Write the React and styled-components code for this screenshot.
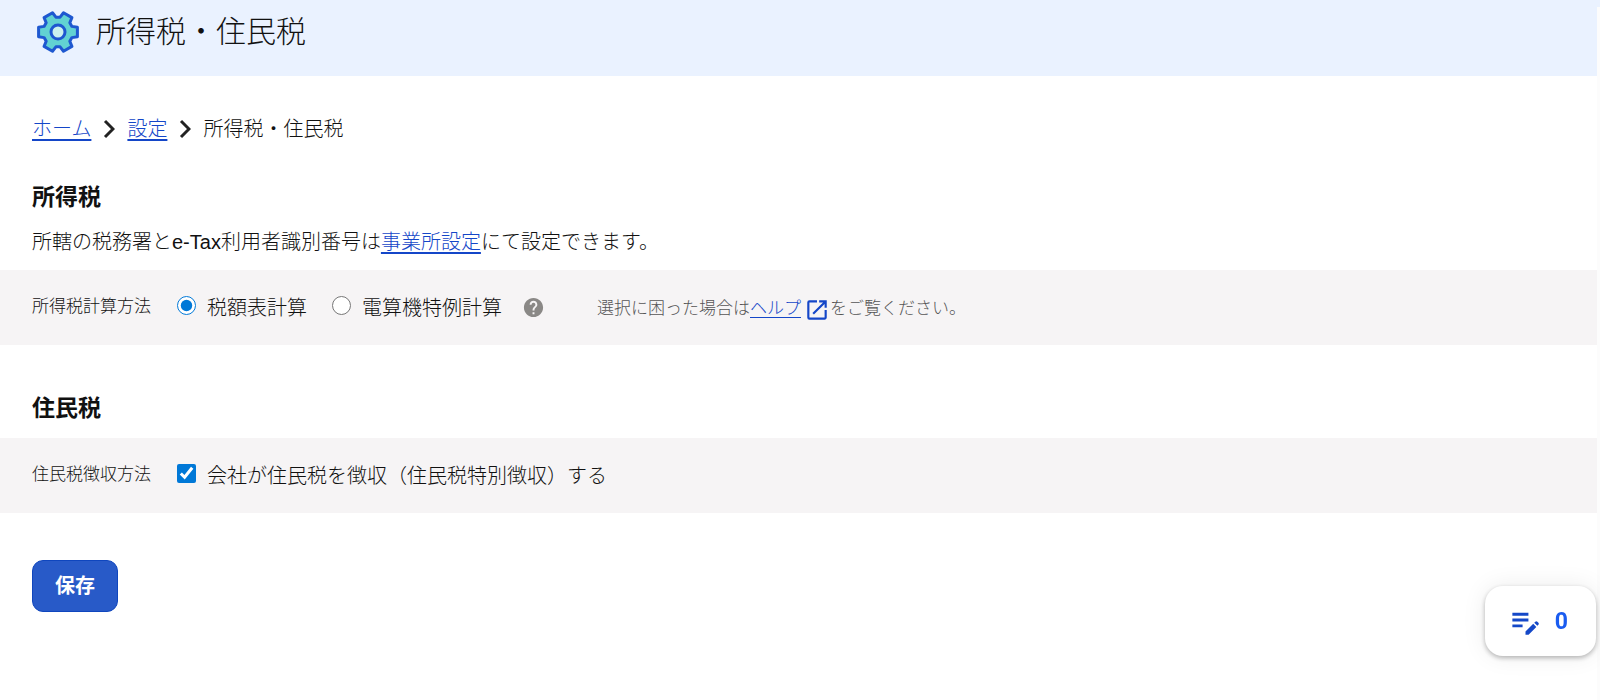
import { useState } from 'react';
import styled, { createGlobalStyle } from 'styled-components';
import { MdEditNote, MdHelp, MdOpenInNew } from 'react-icons/md';


const GlobalStyle = createGlobalStyle`
  * {
    box-sizing: border-box;
  }
  body {
    margin: 0;
    background-color: #fff;
    color: #111;
    font-family: "Liberation Sans", "Noto Sans CJK JP", sans-serif;
    font-size: 20px;
    font-weight: 300;
    line-height: 30px;
  }
`;

const TopEdge = styled.div`
  height: 7px;
  background-color: #eaf2ff;
`;
const Page = styled.div`
  min-height: calc(100vh - 7px);
  border-right: 3px solid #fcfcfc;
`;
const Header = styled.header`
  display: flex;
  align-items: center;
  gap: 16px;
  height: 69px;
  padding: 0 36px 19px;
  background-color: #eaf2ff;
`;
const Title = styled.h1`
  margin: 0;
  font-size: 30px;
  font-weight: 300;
  line-height: 46px;
`;

const Breadcrumb = styled.nav`
  display: flex;
  align-items: center;
  gap: 12px;
  padding: 38px 32px 0;
`;
const TextLink = styled.a`
  color: #1446c8;
  text-decoration: underline;
  text-underline-offset: 3px;
`;

const Section = styled.section`
  padding-top: ${({ $top }) => $top}px;
`;
const SectionTitle = styled.h2`
  margin: 0 32px 15px;
  font-size: 23px;
  font-weight: 700;
  line-height: 30px;
`;
const Lead = styled.p`
  margin: 0 32px 13px;
`;
const Band = styled.div`
  display: flex;
  flex-wrap: wrap;
  align-items: center;
  min-height: 75px;
  padding: 0 32px;
  background-color: #f6f4f5;
`;
const FieldName = styled.span`
  width: 145px;
  padding-bottom: 1px;
  font-size: 17px;
`;
const Choice = styled.label`
  display: flex;
  align-items: center;
  margin-right: ${({ $gap }) => $gap || 0}px;
`;
const ChoiceInput = styled.input`
  width: 19px;
  height: 19px;
  margin: 0 11px 5px 0;
  accent-color: #0078d7;
`;
const HelpButton = styled.button`
  display: flex;
  margin: 0 52px 0 0;
  padding: 0;
  border: 0;
  background: none;
  color: #8a8886;
  cursor: pointer;
`;
const Note = styled.span`
  display: flex;
  align-items: center;
  padding-top: 2px;
  color: #555;
  font-size: 17px;
`;
const HelpLink = styled(TextLink)`
  display: flex;
  align-items: center;
  svg {
    margin: 2px 0 0 3px;
  }
`;

const SaveButton = styled.button`
  display: block;
  height: 52px;
  margin: 47px 32px;
  padding: 0 22px;
  border: 1px solid #0f46be;
  border-radius: 11px;
  background-color: #285ac8;
  color: #fff;
  font: inherit;
  font-weight: 700;
  cursor: pointer;
`;
const MemoButton = styled.button`
  position: fixed;
  right: 4px;
  bottom: 44px;
  display: flex;
  align-items: center;
  gap: 12px;
  height: 70px;
  padding: 0 28px 0 23px;
  border: 0;
  border-radius: 18px;
  background-color: #fff;
  box-shadow: 0 2px 5px rgba(0, 0, 0, 0.28), 0 0 24px rgba(0, 0, 0, 0.08);
  color: #1448c8;
  cursor: pointer;
`;
const MemoCount = styled.span`
  color: #1a5cf0;
  font-family: Roboto, sans-serif;
  font-size: 23px;
  font-weight: 700;
`;


// six teeth, each one: root, tip, tip, root
const gearPoints = [0, 60, 120, 180, 240, 300].flatMap(tooth =>
  [[-22, 15], [-14, 20], [14, 20], [22, 15]].map(([turn, radius]) => {
    const angle = ((tooth + turn) * Math.PI) / 180;
    return `${22 + radius * Math.cos(angle)},${21 + radius * Math.sin(angle)}`;
  })
).join(' ');

function GearIcon() {
  return (
    <svg width="44" height="42" viewBox="0 0 44 42" aria-hidden="true">
      <polygon points={gearPoints} fill="#62d2d2" stroke="#1e58d0" strokeWidth="3" strokeLinejoin="round" />
      <circle cx="22" cy="21" r="7" fill="#ccf2ee" stroke="#1e58d0" strokeWidth="3" />
    </svg>
  );
}

function Chevron() {
  return (
    <svg width="12" height="20" viewBox="0 0 12 20" aria-hidden="true">
      <path d="M2 2 L10 10 L2 18" fill="none" stroke="#222" strokeWidth="3" />
    </svg>
  );
}


export default function App() {
  const [method, setMethod] = useState('table');
  const [collected, setCollected] = useState(true);

  return (
    <>
      <GlobalStyle />
      <TopEdge />
      <Page>
        <Header>
          <GearIcon />
          <Title>所得税・住民税</Title>
        </Header>

        <Breadcrumb>
          <TextLink href="#home">ホーム</TextLink>
          <Chevron />
          <TextLink href="#settings">設定</TextLink>
          <Chevron />
          <span>所得税・住民税</span>
        </Breadcrumb>

        <Section $top={38}>
          <SectionTitle>所得税</SectionTitle>
          <Lead>
            所轄の税務署とe-Tax利用者識別番号は<TextLink href="#office">事業所設定</TextLink>にて設定できます。
          </Lead>
          <Band role="radiogroup" aria-labelledby="method-name">
            <FieldName id="method-name">所得税計算方法</FieldName>
            <Choice $gap={25}>
              <ChoiceInput
                type="radio"
                name="method"
                checked={method === 'table'}
                onChange={() => setMethod('table')}
              />
              税額表計算
            </Choice>
            <Choice $gap={20}>
              <ChoiceInput
                type="radio"
                name="method"
                checked={method === 'computer'}
                onChange={() => setMethod('computer')}
              />
              電算機特例計算
            </Choice>
            <HelpButton type="button" aria-label="ヘルプ">
              <MdHelp size={23} />
            </HelpButton>
            <Note>
              選択に困った場合は
              <HelpLink href="#help">
                ヘルプ
                <MdOpenInNew size={26} />
              </HelpLink>
              をご覧ください。
            </Note>
          </Band>
        </Section>

        <Section $top={48}>
          <SectionTitle>住民税</SectionTitle>
          <Band>
            <FieldName>住民税徴収方法</FieldName>
            <Choice>
              <ChoiceInput
                type="checkbox"
                checked={collected}
                onChange={() => setCollected(!collected)}
              />
              会社が住民税を徴収（住民税特別徴収）する
            </Choice>
          </Band>
        </Section>

        <SaveButton type="button">保存</SaveButton>
      </Page>

      <MemoButton type="button">
        <MdEditNote size={35} />
        <MemoCount>0</MemoCount>
      </MemoButton>
    </>
  );
}
